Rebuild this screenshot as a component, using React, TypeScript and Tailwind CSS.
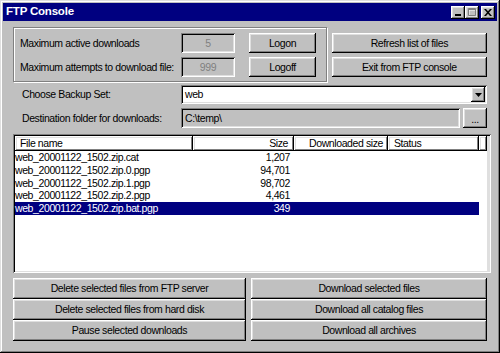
const raised =
  "shadow-[inset_-1px_-1px_#000,inset_1px_1px_#fff,inset_-2px_-2px_#808080,inset_2px_2px_#dfdfdf]";
const sunken =
  "shadow-[inset_1px_1px_#808080,inset_-1px_-1px_#fff,inset_2px_2px_#000,inset_-2px_-2px_#dfdfdf]";

const files = [
  { name: "web_20001122_1502.zip.cat", size: "1,207" },
  { name: "web_20001122_1502.zip.0.pgp", size: "94,701" },
  { name: "web_20001122_1502.zip.1.pgp", size: "98,702" },
  { name: "web_20001122_1502.zip.2.pgp", size: "4,461" },
  { name: "web_20001122_1502.zip.bat.pgp", size: "349", selected: true },
];

function Button({ children, className = "" }: { children: React.ReactNode; className?: string }) {
  return (
    <div className={`${raised} bg-[#c0c0c0] flex items-center justify-center whitespace-nowrap ${className}`}>
      {children}
    </div>
  );
}

function CaptionButton({ children, gap = false }: { children: React.ReactNode; gap?: boolean }) {
  return (
    <div className={`${raised} bg-[#c0c0c0] w-[14px] h-[13px] flex items-center justify-center ${gap ? "ml-[2px]" : ""}`}>
      {children}
    </div>
  );
}

export default function App() {
  return (
    <div className="w-[500px] h-[353px] bg-[#c0c0c0] p-[3px] flex flex-col font-['Liberation_Sans',Arial,sans-serif] text-[10.5px] tracking-[-0.4px] text-black leading-none shadow-[inset_-1px_-1px_#000,inset_1px_1px_#dfdfdf,inset_-2px_-2px_#808080,inset_2px_2px_#fff]">
      {/* title bar */}
      <div className="h-[18px] bg-[#000080] flex items-center pl-[3px] pr-[2px]">
        <span className="text-white font-bold text-[11.5px] tracking-[-0.2px]">FTP Console</span>
        <div className="ml-auto flex">
          <CaptionButton>
            <svg width="8" height="9" viewBox="0 0 8 9">
              <rect x="1" y="6" width="6" height="2" fill="#000" />
            </svg>
          </CaptionButton>
          <CaptionButton>
            <svg width="10" height="9" viewBox="0 0 10 9">
              <path d="M2 2h8v7H2z" fill="none" stroke="#fff" strokeWidth="1" />
              <path d="M1.5 0.5h7v7h-7z M1 1.5h8" fill="none" stroke="#808080" strokeWidth="1" />
            </svg>
          </CaptionButton>
          <CaptionButton gap>
            <svg width="8" height="7" viewBox="0 0 8 7">
              <path d="M0 0h2l2 2.3L6 0h2L5 3.5 8 7H6L4 4.7 2 7H0l3-3.5z" fill="#000" />
            </svg>
          </CaptionButton>
        </div>
      </div>

      <div className="flex flex-col pl-[10px] pr-[10px] pt-[6px]">
        {/* limits + top buttons */}
        <div className="flex">
          <div className="w-[315px] h-[55px] border border-[#808080] shadow-[inset_1px_1px_#fff,1px_1px_#fff] pt-[5px] pl-[6px] flex flex-col gap-[4px]">
            <div className="flex items-center h-[20px]">
              <span className="w-[161px] whitespace-nowrap">Maximum active downloads</span>
              <div className={`${sunken} w-[54px] h-[20px] flex items-center justify-center text-[#808080]`}>5</div>
              <Button className="ml-[14px] w-[67px] h-[20px]">Logon</Button>
            </div>
            <div className="flex items-center h-[20px]">
              <span className="w-[161px] whitespace-nowrap">Maximum attempts to download file:</span>
              <div className={`${sunken} w-[54px] h-[20px] flex items-center justify-center text-[#808080]`}>999</div>
              <Button className="ml-[14px] w-[67px] h-[20px]">Logoff</Button>
            </div>
          </div>
          <div className="ml-[5px] w-[156px] pt-[6px] flex flex-col gap-[4px]">
            <Button className="h-[20px]">Refresh list of files</Button>
            <Button className="h-[20px]">Exit from FTP console</Button>
          </div>
        </div>

        {/* backup set */}
        <div className="flex items-center mt-[3px] h-[19px]">
          <span className="w-[168px] pl-[9px] whitespace-nowrap">Choose Backup Set:</span>
          <div className={`${sunken} flex-1 h-[19px] bg-white flex items-center pl-[4px] pr-[2px]`}>
            <span>web</span>
            <div className={`${raised} ml-auto w-[14px] h-[15px] bg-[#c0c0c0] flex items-center justify-center`}>
              <svg width="7" height="4" viewBox="0 0 7 4">
                <path d="M0 0h7L3.5 4z" fill="#000" />
              </svg>
            </div>
          </div>
        </div>

        {/* destination */}
        <div className="flex items-center mt-[4px] h-[20px]">
          <span className="w-[168px] pl-[9px] whitespace-nowrap">Destination folder for downloads:</span>
          <div className={`${sunken} w-[279px] h-[20px] flex items-center pl-[4px]`}>C:\temp\</div>
          <Button className="ml-[3px] flex-1 h-[20px] items-end pb-[4px]">...</Button>
        </div>

        {/* file list */}
        <div className={`${sunken} mt-[6px] mr-[-4px] h-[139px] p-[2px] flex`}>
          <div className="flex-1 bg-white flex flex-col">
            <div className="flex h-[15px] whitespace-nowrap">
              <div className={`${raised} w-[178px] pl-[5px] flex items-center`}>File name</div>
              <div className={`${raised} w-[101px] pr-[6px] flex items-center justify-end`}>Size</div>
              <div className={`${raised} w-[94px] pr-[5px] flex items-center justify-end`}>Downloaded size</div>
              <div className={`${raised} w-[91px] pl-[6px] flex items-center`}>Status</div>
              <div className={`${raised} w-[8px]`} />
            </div>
            {files.map((f) => (
              <div
                key={f.name}
                className={`flex h-[12.75px] items-center w-[464px] whitespace-nowrap ${f.selected ? "bg-[#000080] text-white" : ""}`}
              >
                <span className="w-[178px]">{f.name}</span>
                <span className="w-[101px] pr-[4px] text-right">{f.size}</span>
              </div>
            ))}
          </div>
          <div className="w-[3px] bg-[#dfdfdf]" />
        </div>

        {/* bottom buttons */}
        <div className="mt-[5px] grid grid-cols-[233px_236px] gap-x-[5px] auto-rows-[21px]">
          <Button>Delete selected files from FTP server</Button>
          <Button>Download selected files</Button>
          <Button>Delete selected files from hard disk</Button>
          <Button>Download all catalog files</Button>
          <Button>Pause selected downloads</Button>
          <Button>Download all archives</Button>
        </div>
      </div>
    </div>
  );
}
